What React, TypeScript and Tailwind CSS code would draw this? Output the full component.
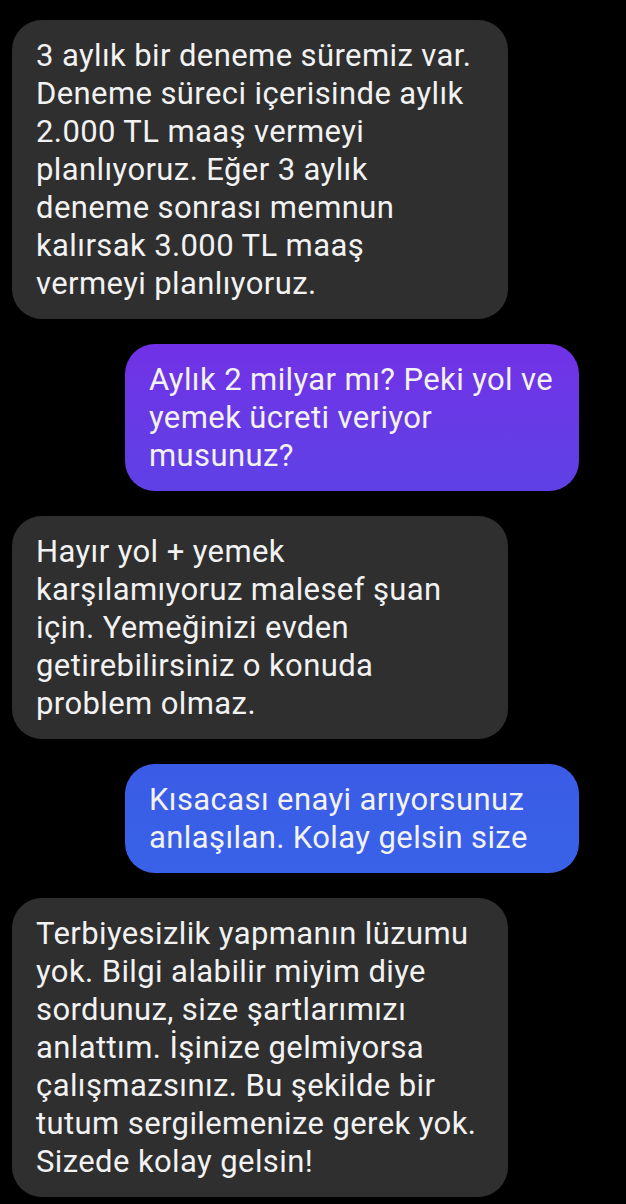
import React from "react";

const font = { fontFamily: "Roboto, 'Noto Sans', sans-serif" };

function Lines({ lines }: { lines: string[] }) {
  return (
    <>
      {lines.map((l, i) => (
        <div key={i} className="whitespace-nowrap">
          {l}
        </div>
      ))}
    </>
  );
}

export default function App() {
  return (
    <div
      className="min-h-[1204px] w-[626px] bg-black pt-[20px] text-[31px] leading-[38px] tracking-[0.4px] text-[#f2f2f2]"
      style={font}
    >
      <div className="flex flex-col gap-[25px]">
        <div className="ml-[12px] w-[496px] rounded-[30px] bg-[#2f2f2f] pl-[24px] pr-[16px] pt-[17px] pb-[16px]">
          <Lines
            lines={[
              "3 aylık bir deneme süremiz var.",
              "Deneme süreci içerisinde aylık",
              "2.000 TL maaş vermeyi",
              "planlıyoruz. Eğer 3 aylık",
              "deneme sonrası memnun",
              "kalırsak 3.000 TL maaş",
              "vermeyi planlıyoruz.",
            ]}
          />
        </div>
        <div className="ml-[125px] w-[454px] rounded-[30px] bg-gradient-to-b from-[#7131e6] to-[#5e41e6] pl-[24px] pr-[16px] pt-[17px] pb-[16px]">
          <Lines
            lines={[
              "Aylık 2 milyar mı? Peki yol ve",
              "yemek ücreti veriyor",
              "musunuz?",
            ]}
          />
        </div>
        <div className="ml-[12px] w-[496px] rounded-[30px] bg-[#2f2f2f] pl-[24px] pr-[16px] pt-[17px] pb-[16px]">
          <Lines
            lines={[
              "Hayır yol + yemek",
              "karşılamıyoruz malesef şuan",
              "için. Yemeğinizi evden",
              "getirebilirsiniz o konuda",
              "problem olmaz.",
            ]}
          />
        </div>
        <div className="ml-[125px] w-[454px] rounded-[30px] bg-gradient-to-b from-[#3b5be6] to-[#3862e8] pl-[24px] pr-[16px] pt-[17px] pb-[16px]">
          <Lines
            lines={["Kısacası enayi arıyorsunuz", "anlaşılan. Kolay gelsin size"]}
          />
        </div>
        <div className="ml-[12px] w-[496px] rounded-[30px] bg-[#2f2f2f] pl-[24px] pr-[16px] pt-[17px] pb-[16px]">
          <Lines
            lines={[
              "Terbiyesizlik yapmanın lüzumu",
              "yok. Bilgi alabilir miyim diye",
              "sordunuz, size şartlarımızı",
              "anlattım. İşinize gelmiyorsa",
              "çalışmazsınız. Bu şekilde bir",
              "tutum sergilemenize gerek yok.",
              "Sizede kolay gelsin!",
            ]}
          />
        </div>
      </div>
    </div>
  );
}
